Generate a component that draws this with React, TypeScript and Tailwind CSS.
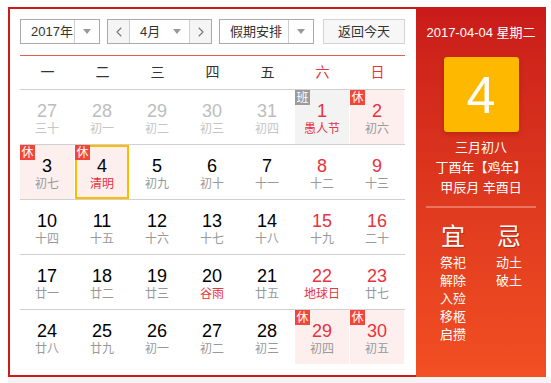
import { ChevronLeft, ChevronRight } from "lucide-react";

type Day = {
  d: number;
  l: string;
  other?: boolean;
  lred?: boolean;
  tag?: "休" | "班";
  sel?: boolean;
};

const weekNames = ["一", "二", "三", "四", "五", "六", "日"];

const weeks: Day[][] = [
  [
    { d: 27, l: "三十", other: true },
    { d: 28, l: "初一", other: true },
    { d: 29, l: "初二", other: true },
    { d: 30, l: "初三", other: true },
    { d: 31, l: "初四", other: true },
    { d: 1, l: "愚人节", lred: true, tag: "班" },
    { d: 2, l: "初六", tag: "休" },
  ],
  [
    { d: 3, l: "初七", tag: "休" },
    { d: 4, l: "清明", lred: true, tag: "休", sel: true },
    { d: 5, l: "初九" },
    { d: 6, l: "初十" },
    { d: 7, l: "十一" },
    { d: 8, l: "十二" },
    { d: 9, l: "十三" },
  ],
  [
    { d: 10, l: "十四" },
    { d: 11, l: "十五" },
    { d: 12, l: "十六" },
    { d: 13, l: "十七" },
    { d: 14, l: "十八" },
    { d: 15, l: "十九" },
    { d: 16, l: "二十" },
  ],
  [
    { d: 17, l: "廿一" },
    { d: 18, l: "廿二" },
    { d: 19, l: "廿三" },
    { d: 20, l: "谷雨", lred: true },
    { d: 21, l: "廿五" },
    { d: 22, l: "地球日", lred: true },
    { d: 23, l: "廿七" },
  ],
  [
    { d: 24, l: "廿八" },
    { d: 25, l: "廿九" },
    { d: 26, l: "初一" },
    { d: 27, l: "初二" },
    { d: 28, l: "初三" },
    { d: 29, l: "初四", tag: "休" },
    { d: 30, l: "初五", tag: "休" },
  ],
];

const yi = ["祭祀", "解除", "入殓", "移柩", "启攒"];
const ji = ["动土", "破土"];

const Caret = () => (
  <span className="h-0 w-0 border-x-[4px] border-t-[5px] border-x-transparent border-t-[#9a9a9a]" />
);

const DayCell = ({ day, weekend }: { day: Day; weekend: boolean }) => {
  const numColor = day.other
    ? "text-[#bdbdbd]"
    : weekend
      ? "text-[#e8323c]"
      : "text-black";
  const lunarColor = day.other
    ? "text-[#c4c4c4]"
    : day.lred
      ? "text-[#e8323c]"
      : "text-[#999999]";
  const bg =
    day.tag === "休" ? "bg-[#fdefee]" : day.tag === "班" ? "bg-[#f3f3f3]" : "";

  return (
    <div className="w-[55px] pr-[1px]">
      <div
        className={`relative flex h-[54px] flex-col items-center pt-[11px] ${bg} ${
          day.sel ? "shadow-[inset_0_0_0_2px_#ffbb00]" : ""
        }`}
      >
        {day.tag && (
          <span
            className={`absolute left-0 top-0 flex h-[15px] w-[15px] items-center justify-center text-[12px] leading-none text-white ${
              day.tag === "休" ? "bg-[#f2463a]" : "bg-[#9b9b9b]"
            }`}
          >
            {day.tag}
          </span>
        )}
        <span className={`text-[18px] leading-[20px] ${numColor}`}>{day.d}</span>
        <span className={`text-[12px] leading-[16px] ${lunarColor}`}>{day.l}</span>
      </div>
    </div>
  );
};

const App = () => {
  return (
    <div className="font-['Liberation_Sans','Noto_Sans_CJK_SC',sans-serif] bg-white h-[383px]">
      <div className="ml-[8px] mt-[7px] flex h-[370px] w-[538px]">
        {/* calendar */}
        <div className="w-[408px] border-y-2 border-l-2 border-[#cc1c1a] pl-[10px] pt-[10px]">
          <div className="flex h-[25px] text-[13px] text-[#333]">
            <div className="flex w-[80px] border border-[#a9a9a9]">
              <span className="flex flex-1 items-center pl-[10px]">2017年</span>
              <span className="flex w-[25px] items-center justify-center border-l border-[#cfcfcf]">
                <Caret />
              </span>
            </div>
            <div className="ml-[7px] flex w-[105px] border border-[#a9a9a9]">
              <span className="flex w-[22px] items-center justify-center border-r border-[#cfcfcf] bg-[#f5f5f5] text-[#777]">
                <ChevronLeft size={16} strokeWidth={1.6} />
              </span>
              <span className="flex flex-1 items-center justify-between pl-[10px] pr-[8px]">
                4月
                <Caret />
              </span>
              <span className="flex w-[22px] items-center justify-center border-l border-[#cfcfcf] bg-[#f5f5f5] text-[#777]">
                <ChevronRight size={16} strokeWidth={1.6} />
              </span>
            </div>
            <div className="ml-[7px] flex w-[95px] border border-[#a9a9a9]">
              <span className="flex flex-1 items-center pl-[10px]">假期安排</span>
              <span className="flex w-[25px] items-center justify-center border-l border-[#cfcfcf]">
                <Caret />
              </span>
            </div>
            <button className="ml-[9px] flex w-[82px] items-center justify-center border border-[#d3d3d3] bg-[#f7f7f7] text-[13px] text-[#333]">
              返回今天
            </button>
          </div>

          <div className="mt-[11px] w-[385px] border-t border-[#e35c50]">
            <div className="flex h-[33px] items-center text-[14px]">
              {weekNames.map((w, i) => (
                <span
                  key={w}
                  className={`w-[55px] text-center ${i > 4 ? "text-[#e8323c]" : "text-[#333]"}`}
                >
                  {w}
                </span>
              ))}
            </div>
            {weeks.map((week, wi) => (
              <div key={wi} className="flex border-t border-[#d0d0d0]">
                {week.map((day, di) => (
                  <DayCell key={di} day={day} weekend={di > 4} />
                ))}
              </div>
            ))}
          </div>
        </div>

        {/* side panel */}
        <div className="flex w-[130px] flex-col items-center bg-gradient-to-b from-[#c91b1a] to-[#f24f23] pt-[16px] text-white">
          <div className="text-[13px] leading-[20px]">2017-04-04 星期二</div>
          <div className="mt-[14px] flex h-[75px] w-[75px] items-center justify-center rounded-[3px] bg-[#ffb800] text-[52px] leading-none shadow-[0_2px_4px_rgba(120,20,0,0.35)]">
            4
          </div>
          <div className="mt-[6px] text-center text-[13px] leading-[20px]">
            <div>三月初八</div>
            <div>丁酉年【鸡年】</div>
            <div>甲辰月 辛酉日</div>
          </div>
          <div className="mt-[8px] h-[2px] w-[110px] bg-[rgba(255,255,255,0.3)]" />
          <div className="mt-[14px] flex">
            <div className="flex w-[56px] flex-col items-center">
              <span className="text-[24px] leading-[30px] [text-shadow:1px_1px_1px_rgba(0,0,0,0.25)]">宜</span>
              <div className="mt-[2px] flex flex-col items-center text-[13px] leading-[18px]">
                {yi.map((t) => (
                  <span key={t}>{t}</span>
                ))}
              </div>
            </div>
            <div className="flex w-[56px] flex-col items-center">
              <span className="text-[24px] leading-[30px] [text-shadow:1px_1px_1px_rgba(0,0,0,0.25)]">忌</span>
              <div className="mt-[2px] flex flex-col items-center text-[13px] leading-[18px]">
                {ji.map((t) => (
                  <span key={t}>{t}</span>
                ))}
              </div>
            </div>
          </div>
        </div>
      </div>
      <div className="ml-[8px] h-[6px] bg-[#f4f4f4]" />
    </div>
  );
};

export default App;
